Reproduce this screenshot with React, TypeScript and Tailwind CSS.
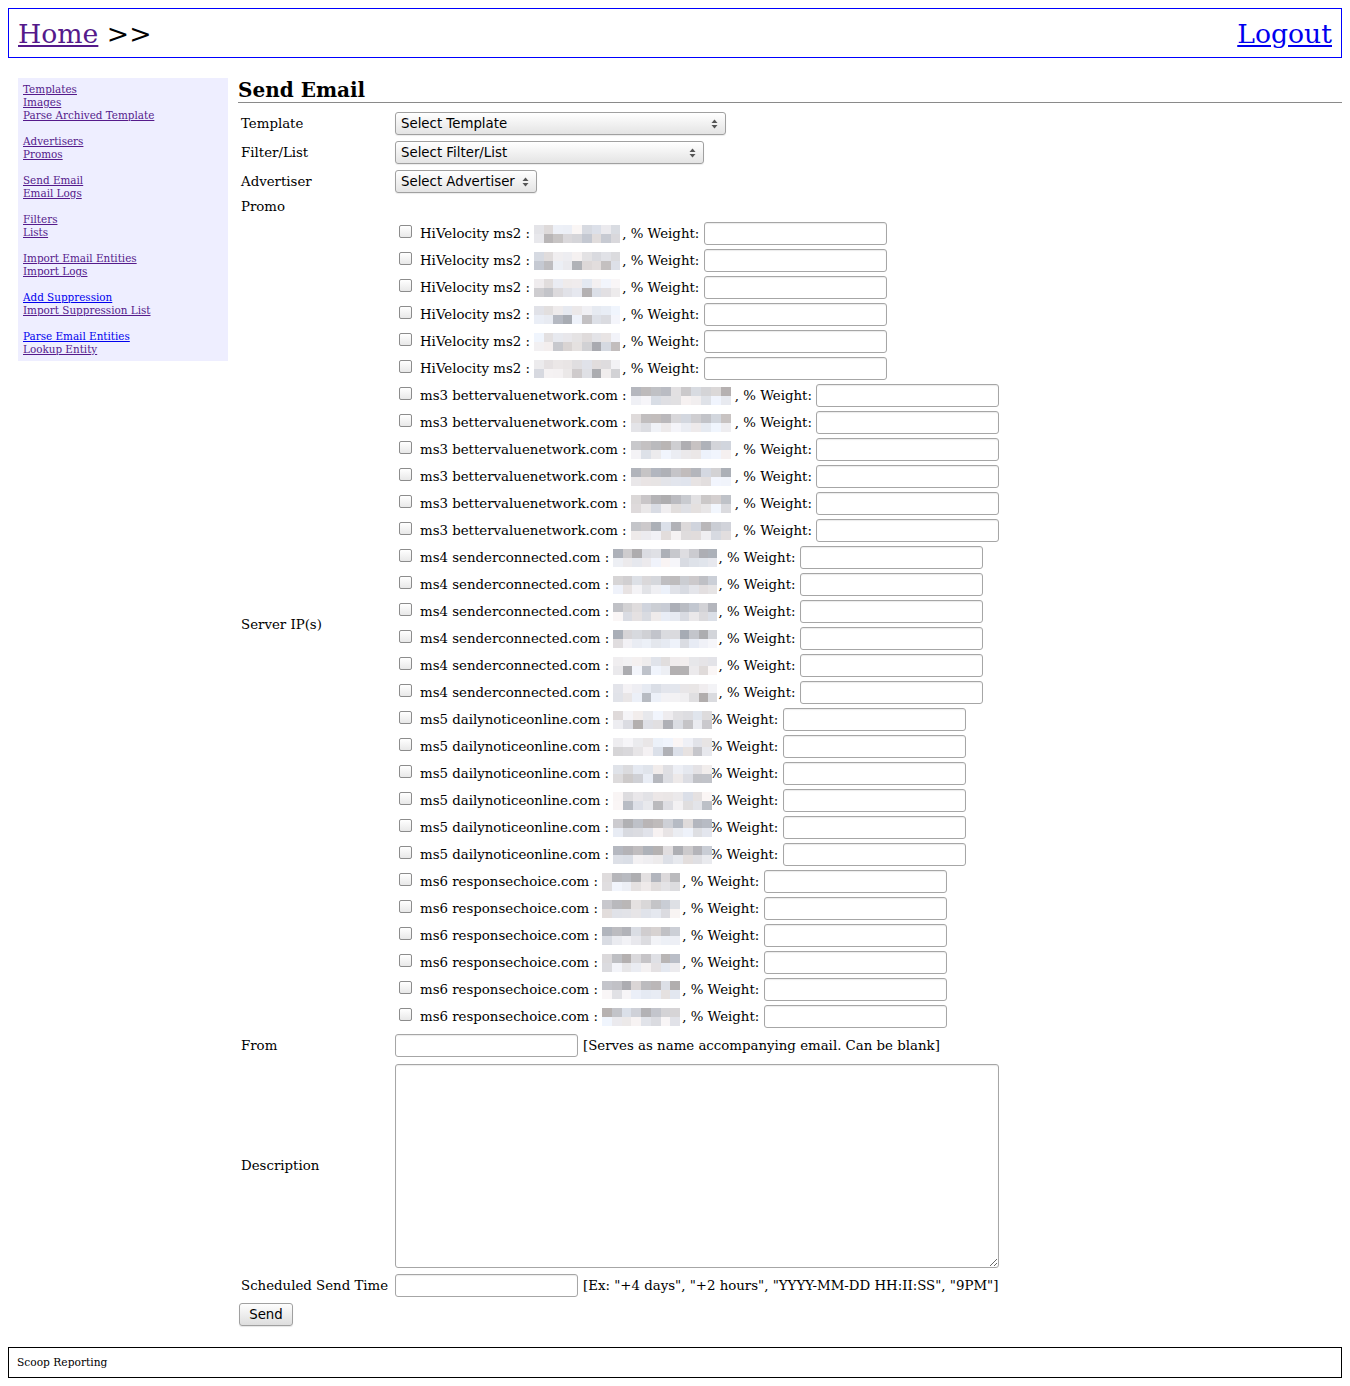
import React from "react";

type Group = { label: string; ipW: number; blurW: number };

// each server family: label, width of the (hidden) ip text, width of the pixelated cover
const GROUPS: Group[] = [
  { label: "HiVelocity ms2", ipW: 88, blurW: 86 },
  { label: "ms3 bettervaluenetwork.com", ipW: 104, blurW: 100 },
  { label: "ms4 senderconnected.com", ipW: 105, blurW: 104 },
  { label: "ms5 dailynoticeonline.com", ipW: 88, blurW: 99 },
  { label: "ms6 responsechoice.com", ipW: 80, blurW: 78 },
];

const sideGroups: { text: string; visited: boolean }[][] = [
  [
    { text: "Templates", visited: true },
    { text: "Images", visited: true },
    { text: "Parse Archived Template", visited: true },
  ],
  [
    { text: "Advertisers", visited: true },
    { text: "Promos", visited: true },
  ],
  [
    { text: "Send Email", visited: true },
    { text: "Email Logs", visited: true },
  ],
  [
    { text: "Filters", visited: true },
    { text: "Lists", visited: true },
  ],
  [
    { text: "Import Email Entities", visited: true },
    { text: "Import Logs", visited: true },
  ],
  [
    { text: "Add Suppression", visited: false },
    { text: "Import Suppression List", visited: true },
  ],
  [
    { text: "Parse Email Entities", visited: false },
    { text: "Lookup Entity", visited: true },
  ],
];

function rng(seed: number) {
  let s = seed % 2147483647;
  if (s <= 0) s += 2147483646;
  return () => {
    s = (s * 16807) % 2147483647;
    return (s - 1) / 2147483646;
  };
}

function Mosaic({ width, seed }: { width: number; seed: number }) {
  const r = rng(seed * 7919 + 13);
  const cols = Math.ceil(width / 10);
  const dark = r() > 0.4;
  const rows = [0, 1].map((row) =>
    Array.from({ length: cols }, () => {
      const heavy = row === 0 ? dark : !dark && r() > 0.5;
      const g = heavy ? 170 + r() * 55 : 218 + r() * 28;
      const t = (r() - 0.5) * 10;
      return `rgb(${Math.round(g + t)}, ${Math.round(g)}, ${Math.round(g - t + 4)})`;
    })
  );
  return (
    <span
      className="absolute left-0 top-1/2 z-10 flex -translate-y-1/2 flex-col"
      style={{ width }}
    >
      {rows.map((row, i) => (
        <span key={i} className="flex h-[9px]">
          {row.map((c, j) => (
            <span key={j} className="h-full flex-1" style={{ backgroundColor: c }} />
          ))}
        </span>
      ))}
    </span>
  );
}

function Checkbox() {
  return (
    <span className="inline-block h-[13px] w-[13px] shrink-0 rounded-[2px] border border-[#8c8c8c] bg-gradient-to-b from-white to-[#e8e8e8]" />
  );
}

function TextInput({ className = "" }: { className?: string }) {
  return (
    <input
      type="text"
      className={`h-[23px] w-[183px] rounded-[3px] border border-[#a6a6a6] bg-white px-1 shadow-[inset_0_1px_1px_rgba(0,0,0,0.08)] outline-none ${className}`}
    />
  );
}

function Select({ text, width }: { text: string; width: number }) {
  return (
    <div
      className="relative flex h-[23px] items-center rounded-[3px] border border-[#a0a0a0] bg-gradient-to-b from-white to-[#e4e4e4] pl-[5px] font-['DejaVu_Sans',sans-serif] text-[13.33px] text-black shadow-[0_1px_1px_rgba(0,0,0,0.08)]"
      style={{ width }}
    >
      <span>{text}</span>
      <svg
        className="absolute right-[7px] top-1/2 -translate-y-1/2"
        width="7"
        height="11"
        viewBox="0 0 7 11"
      >
        <path d="M3.5 1 L6.5 4.5 L0.5 4.5 Z" fill="#555" />
        <path d="M3.5 10 L6.5 6.5 L0.5 6.5 Z" fill="#555" />
      </svg>
    </div>
  );
}

function Row({ label, children, className = "h-[29px]" }: { label: string; children?: React.ReactNode; className?: string }) {
  return (
    <div className={`flex items-center ${className}`}>
      <div className="w-[157px] shrink-0 whitespace-nowrap pl-[3px]">{label}</div>
      <div className="flex items-center">{children}</div>
    </div>
  );
}

export default function App() {
  const serverRows: { g: Group; n: number }[] = [];
  GROUPS.forEach((g) => {
    for (let i = 0; i < 6; i++) serverRows.push({ g, n: serverRows.length });
  });

  return (
    <div className="min-h-screen bg-white p-2 font-['DejaVu_Serif',serif] text-[13.33px] leading-[16px] text-black">
      <header className="flex h-[50px] items-center justify-between border border-[#0000ff] px-[9px] text-[26.67px] leading-[31px]">
        <div>
          <a href="#" className="text-[#551a8b] underline">
            Home
          </a>
          <span> &gt;&gt;</span>
        </div>
        <a href="#" className="text-[#0000ee] underline">
          Logout
        </a>
      </header>

      <div className="mt-5 flex items-start">
        <nav className="ml-[10px] w-[210px] shrink-0 bg-[#eeeeff] px-[5px] py-[5px] text-[10.4px] leading-[13px]">
          {sideGroups.map((grp, gi) => (
            <div key={gi} className={gi > 0 ? "mt-[13px]" : ""}>
              {grp.map((l) => (
                <div key={l.text}>
                  <a
                    href="#"
                    className={`underline ${l.visited ? "text-[#551a8b]" : "text-[#0000ee]"}`}
                  >
                    {l.text}
                  </a>
                </div>
              ))}
            </div>
          ))}
        </nav>

        <main className="ml-[10px] flex-1">
          <h2 className="border-b border-[#8a8a8a] text-[20px] font-bold leading-[24px]">Send Email</h2>

          <div className="mt-[6px]">
            <Row label="Template">
              <Select text="Select Template" width={331} />
            </Row>
            <Row label="Filter/List">
              <Select text="Select Filter/List" width={309} />
            </Row>
            <Row label="Advertiser">
              <Select text="Select Advertiser" width={142} />
            </Row>
            <Row label="Promo" className="h-[21px]" />

            <div className="mt-[3px] flex items-center">
              <div className="w-[157px] shrink-0 pl-[3px]">Server IP(s)</div>
              <div>
                {serverRows.map(({ g, n }) => (
                  <div key={n} className="flex h-[27px] items-center">
                    <span className="ml-[4px] mr-[8px]">
                      <Checkbox />
                    </span>
                    <span className="whitespace-pre">{`${g.label} : `}</span>
                    <span className="relative inline-block h-[16px]" style={{ width: g.ipW }}>
                      <Mosaic width={g.blurW} seed={n + 1} />
                    </span>
                    <span className="whitespace-pre">{", % Weight: "}</span>
                    <TextInput />
                  </div>
                ))}
              </div>
            </div>

            <Row label="From" className="mt-[1px] h-[29px]">
              <TextInput />
              <span className="ml-[5px]">[Serves as name accompanying email. Can be blank]</span>
            </Row>

            <div className="flex items-center pb-[3px] pt-[4px]">
              <div className="w-[157px] shrink-0 pl-[3px]">Description</div>
              <textarea className="h-[204px] w-[604px] rounded-[3px] border border-[#a6a6a6] bg-white shadow-[inset_0_1px_1px_rgba(0,0,0,0.08)] outline-none" />
            </div>

            <Row label="Scheduled Send Time">
              <TextInput />
              <span className="ml-[5px]">[Ex: "+4 days", "+2 hours", "YYYY-MM-DD HH:II:SS", "9PM"]</span>
            </Row>

            <div className="flex h-[29px] items-center pl-[1px]">
              <button className="h-[23px] w-[54px] rounded-[3px] border border-[#a0a0a0] bg-gradient-to-b from-[#fdfdfd] to-[#dedede] font-['DejaVu_Sans',sans-serif] text-[13.33px] text-black shadow-[0_1px_1px_rgba(0,0,0,0.1)]">
                Send
              </button>
            </div>
          </div>
        </main>
      </div>

      <footer className="mt-[18px] flex h-[31px] items-center border border-black px-[8px] text-[10.67px]">
        Scoop Reporting
      </footer>
    </div>
  );
}
